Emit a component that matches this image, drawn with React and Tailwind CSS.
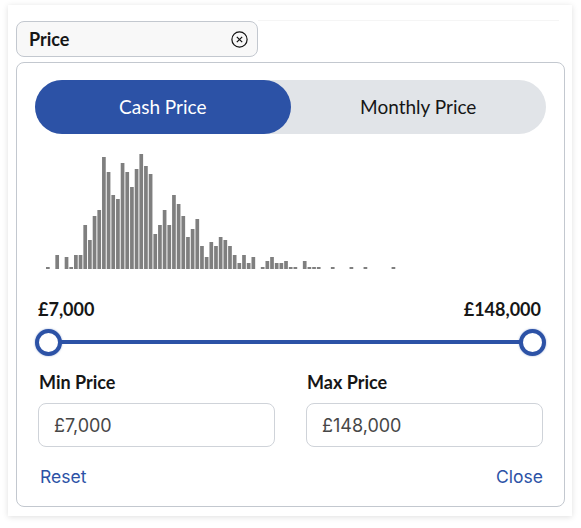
const BARS = [
  2, 0, 14, 0, 12, 2, 14, 14, 44, 29, 53, 59, 112, 97, 74, 70, 106, 97, 82, 100,
  115, 103, 95, 35, 44, 59, 44, 74, 65, 53, 32, 40, 50, 23, 12, 27, 23, 32, 29, 23,
  14, 6, 14, 6, 12, 0, 2, 8, 12, 6, 6, 8, 2, 2, 0, 8, 2, 2, 2, 0,
  0, 2, 0, 0, 0, 2, 0, 0, 2, 0, 0, 0, 0, 0, 2,
];

function Histogram() {
  return (
    <svg width="511" height="119" className="block">
      {BARS.map((h, i) =>
        h > 0 ? (
          <rect key={i} x={11 + i * 4.67} y={119 - h} width="3.7" height={h} fill="#7f7f7f" />
        ) : null
      )}
    </svg>
  );
}

function Thumb() {
  return (
    <div className="w-[27px] h-[27px] rounded-full bg-white border-[4px] border-[#2c52a6] shadow-[0_0_2px_rgba(44,82,166,0.5)] relative z-10" />
  );
}

export default function App() {
  return (
    <div className="min-h-screen bg-white pt-[5px] pl-[8px] font-['Lato',sans-serif] text-[#161616]">
      <div className="w-[564px] h-[511px] bg-white shadow-[0_1px_6px_rgba(0,0,0,0.13)] pt-[16px] pl-[8px]">
        {/* filter chip */}
        <div className="flex">
          <div className="w-[242px] h-[36px] rounded-[8px] border border-[#c3c8cf] bg-[#f8f8f8] flex items-center justify-between pl-[12px] pr-[9px]">
            <span className="text-[18px] font-bold">Price</span>
            <svg width="17" height="17" viewBox="0 0 17 17" fill="none" stroke="#111" strokeWidth="1.2">
              <circle cx="8.5" cy="8.5" r="7.6" />
              <path d="M5.8 5.8 L11.2 11.2 M11.2 5.8 L5.8 11.2" />
            </svg>
          </div>
          <div className="flex-1 mr-[13px] -mt-px border-t border-[#f5f5f5]" />
        </div>

        {/* panel */}
        <div className="mt-[5px] w-[549px] h-[445px] rounded-[8px] border border-[#c3c8cf] px-[18px] pt-[17px]">
          <div className="h-[54px] rounded-full bg-[#e1e4e8] flex text-[19px]">
            <div className="w-1/2 rounded-full bg-[#2c52a6] text-white flex items-center justify-center">Cash Price</div>
            <div className="w-1/2 flex items-center justify-center">Monthly Price</div>
          </div>

          <div className="mt-[16px]">
            <Histogram />
          </div>

          <div className="mt-[28px] pl-[3px] pr-[5px] flex justify-between text-[18px] font-bold leading-[24px]">
            <span>£7,000</span>
            <span>£148,000</span>
          </div>

          <div className="mt-[8px] relative flex justify-between items-center h-[27px]">
            <div className="absolute left-[13px] right-[13px] top-[11px] h-[4px] bg-[#2c52a6]" />
            <Thumb />
            <Thumb />
          </div>

          <div className="mt-[14px] px-[3px] grid grid-cols-2 gap-[31px]">
            <div>
              <div className="pl-px text-[18px] font-bold leading-[24px]">Min Price</div>
              <div className="mt-[9px] h-[44px] rounded-[8px] border border-[#cfd3d9] flex items-center pl-[15px] font-['Inter',sans-serif] text-[18px] text-[#474747]">
                £7,000
              </div>
            </div>
            <div>
              <div className="pl-px text-[18px] font-bold leading-[24px]">Max Price</div>
              <div className="mt-[9px] h-[44px] rounded-[8px] border border-[#cfd3d9] flex items-center pl-[15px] font-['Inter',sans-serif] text-[18px] text-[#474747]">
                £148,000
              </div>
            </div>
          </div>

          <div className="mt-[18px] pl-[5px] pr-[3px] flex justify-between font-['Inter',sans-serif] text-[17.5px] leading-[24px] text-[#2c52a6]">
            <span>Reset</span>
            <span>Close</span>
          </div>
        </div>
      </div>
    </div>
  );
}
